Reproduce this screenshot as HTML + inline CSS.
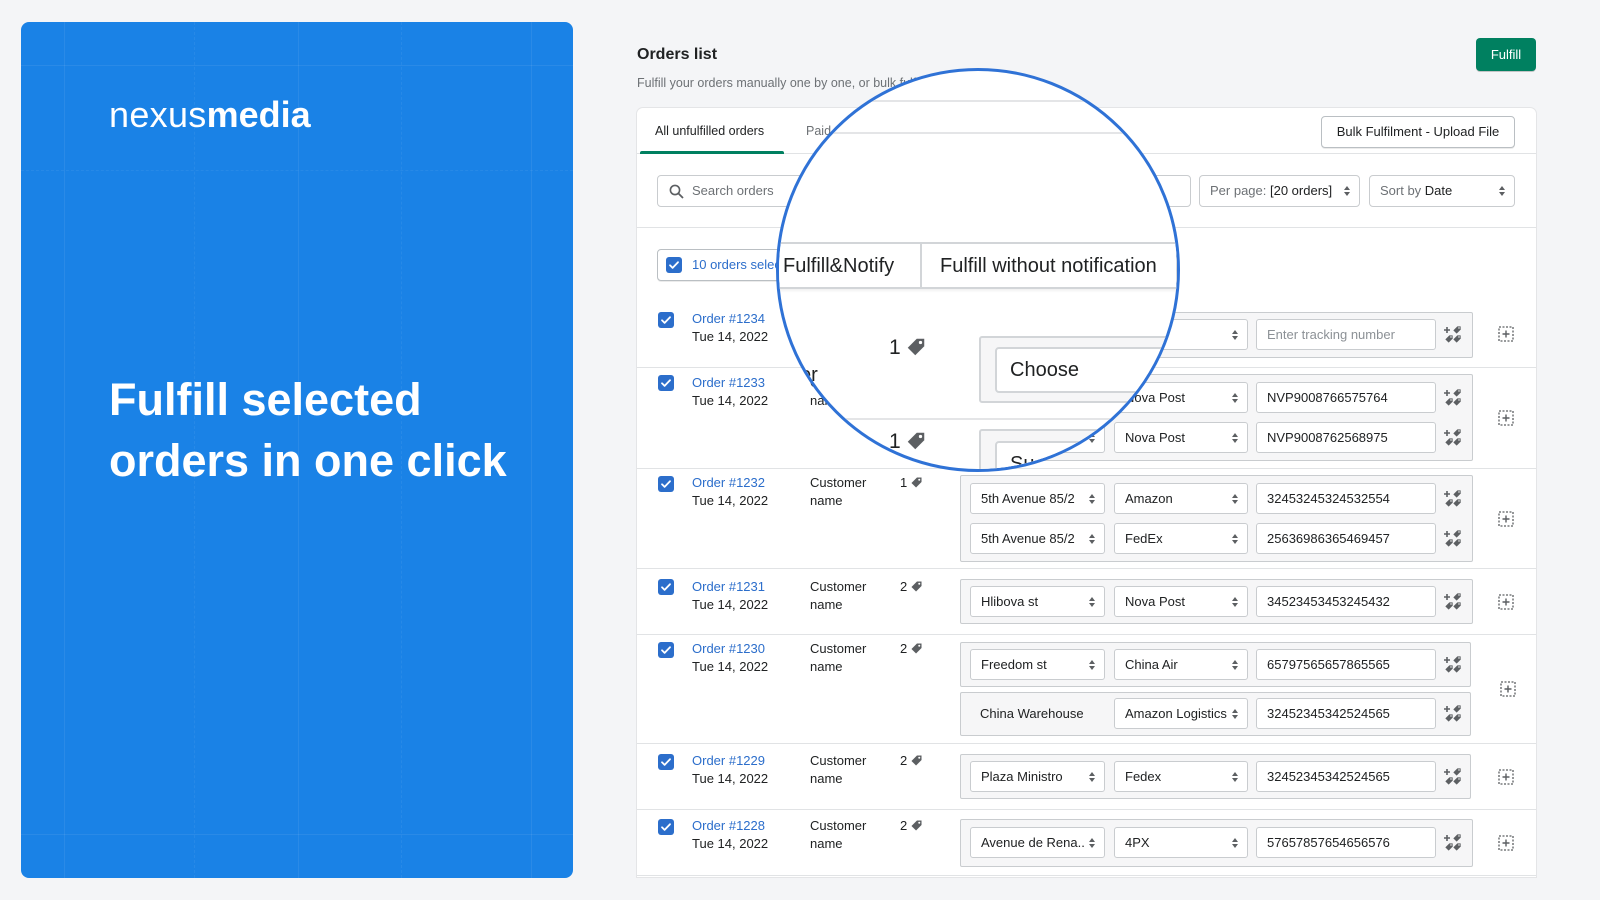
<!DOCTYPE html>
<html><head><meta charset="utf-8">
<style>
*{margin:0;padding:0;box-sizing:border-box}
body{width:1600px;height:900px;background:#f4f5f7;position:relative;overflow:hidden;font-family:"Liberation Sans",sans-serif;color:#202223;font-size:13px}
.a{position:absolute}
.panel{left:21px;top:22px;width:552px;height:856px;background:#1a82e6;border-radius:8px;overflow:hidden}
.vl{position:absolute;top:0;bottom:0;width:1px;background:rgba(255,255,255,0.07)}
.hl{position:absolute;left:0;right:0;height:1px;background:rgba(255,255,255,0.07)}
.card{left:637px;top:108px;width:899px;height:769px;background:#fff;border-radius:6px 6px 0 0;box-shadow:0 0 0 1px #e4e5e7}
.btn{position:absolute;background:#fff;border:1px solid #babfc3;border-radius:4px;box-shadow:0 1px 0 rgba(0,0,0,.08);font-size:13px;text-align:center}
.inp{position:absolute;background:#fff;border:1px solid #c9cccf;border-radius:4px;height:32px;line-height:30px;font-size:13px;color:#6d7175;padding-left:10px}
.sep{position:absolute;left:637px;width:899px;height:1px;background:#e1e3e5}
.g{position:absolute;left:960px;width:513px;background:#f6f6f7;border:1px solid #c9cccf;border-radius:2px}
.f{position:absolute;height:31px;background:#fff;border:1px solid #c9cccf;border-radius:3px;line-height:29px;padding-left:10px;font-size:13px;color:#202223;white-space:nowrap;overflow:hidden}
.s1{left:970px;width:135px}.s2{left:1114px;width:134px}.tk{left:1256px;width:180px}
.ar{position:absolute;right:9px;top:10px}
.cb{position:absolute;left:658px;width:16px;height:16px;background:#2c6ecb;border-radius:3px}
.ord{position:absolute;left:692px;line-height:18px;font-size:13px}
.ord b{font-weight:normal;color:#2c6ecb;display:block}
.cn{position:absolute;left:810px;line-height:18px}
.q{position:absolute;left:900px;line-height:18px}
.ti{position:absolute;left:1444px}
.ad{position:absolute;left:1498px}
</style></head><body>
<svg width="0" height="0" style="position:absolute">
<defs>
<symbol id="arr" viewBox="0 0 6 10"><path d="M3 0L6 4H0z M3 10L0 6H6z" fill="#5c5f62"/></symbol>
<symbol id="chk" viewBox="0 0 16 16"><path d="M4 8.3l2.6 2.6L12 5.2" stroke="#fff" stroke-width="1.8" fill="none" stroke-linecap="round" stroke-linejoin="round"/></symbol>
<symbol id="tag" viewBox="0 0 12 12"><path d="M6.5 0.5H11.5V5.5L5.5 11.5L0.5 6.5Z" fill="#5c5f62"/><circle cx="9" cy="3" r="1.1" fill="#fff"/></symbol>
<symbol id="tk" viewBox="0 0 18 18"><path d="M3 1v6M0 4h6" stroke="#5c5f62" stroke-width="1.6"/><use href="#tag" x="9" y="0" width="8" height="8"/><use href="#tag" x="1" y="9" width="8" height="8"/><use href="#tag" x="9" y="9" width="8" height="8"/></symbol>
<symbol id="add" viewBox="0 0 16 16"><rect x="1" y="1" width="14" height="14" fill="none" stroke="#5c5f62" stroke-width="1.3" stroke-dasharray="2 1.5"/><path d="M8 4.5v7M4.5 8h7" stroke="#5c5f62" stroke-width="1.4"/></symbol>
</defs></svg>

<div class="a panel">
 <div class="vl" style="left:43px"></div><div class="vl" style="left:173px;border-left:1px dashed rgba(255,255,255,.06);background:none"></div><div class="vl" style="left:277px"></div><div class="vl" style="left:380px;border-left:1px dashed rgba(255,255,255,.06);background:none"></div><div class="vl" style="left:510px"></div>
 <div class="hl" style="top:43px"></div><div class="hl" style="top:148px;border-top:1px dashed rgba(255,255,255,.06);background:none"></div><div class="hl" style="top:812px"></div>
 <div class="a" style="left:88px;top:72px;font-size:36px;color:#fff;line-height:42px;white-space:nowrap"><span style="font-weight:300;letter-spacing:.3px">nexus</span><b>media</b></div>
 <div class="a" style="left:88px;top:347px;font-size:45px;font-weight:bold;color:#fff;line-height:61px;white-space:nowrap">Fulfill selected<br>orders in one click</div>
</div>

<div class="a" style="left:637px;top:46px;font-size:16px;font-weight:bold;color:#202223">Orders list</div>
<div class="a" style="left:637px;top:76px;font-size:12.5px;color:#6d7175">Fulfill your orders manually one by one, or bulk fulfill</div>
<div class="a" style="left:1476px;top:38px;width:60px;height:33px;background:#008060;border-radius:4px;color:#fff;font-size:13px;line-height:33px;text-align:center;box-shadow:0 1px 0 rgba(0,0,0,.2)">Fulfill</div>

<div class="a card"></div>
<div class="a" style="left:655px;top:124px;font-size:12.5px">All unfulfilled orders</div>
<div class="a" style="left:806px;top:124px;font-size:12.5px;color:#6d7175">Paid</div>
<div class="a" style="left:637px;top:153px;width:899px;height:1px;background:#e1e3e5"></div>
<div class="a" style="left:640px;top:151px;width:144px;height:3px;background:#008060;border-radius:2px 2px 0 0"></div>
<div class="btn" style="left:1321px;top:116px;width:194px;height:32px;line-height:30px">Bulk Fulfilment - Upload File</div>

<div class="inp" style="left:657px;top:175px;width:534px;padding-left:34px">Search orders
 <svg class="a" style="left:11px;top:8px" width="15" height="15" viewBox="0 0 15 15"><circle cx="6" cy="6" r="4.6" fill="none" stroke="#5c5f62" stroke-width="1.6"/><path d="M9.5 9.5L14 14" stroke="#5c5f62" stroke-width="1.8"/></svg></div>
<div class="inp" style="left:1199px;top:175px;width:161px">Per page: <span style="color:#202223">[20 orders]</span><svg class="ar" width="6" height="10"><use href="#arr"/></svg></div>
<div class="inp" style="left:1369px;top:175px;width:146px">Sort by <span style="color:#202223">Date</span><svg class="ar" width="6" height="10"><use href="#arr"/></svg></div>
<div class="a" style="left:637px;top:227px;width:899px;height:1px;background:#e1e3e5"></div>

<div class="btn" style="left:657px;top:249px;width:140px;height:32px;text-align:left;padding-left:34px;line-height:30px;color:#2c6ecb;white-space:nowrap;overflow:hidden">10 orders selected</div>
<div class="cb" style="left:666px;top:257px"><svg width="16" height="16"><use href="#chk"/></svg></div>

<div class="sep" style="top:367px"></div><div class="sep" style="top:468px"></div><div class="sep" style="top:568px"></div><div class="sep" style="top:634px"></div><div class="sep" style="top:743px"></div><div class="sep" style="top:809px"></div><div class="sep" style="top:875px"></div>

<div class="cb" style="top:312px"><svg width="16" height="16"><use href="#chk"/></svg></div>
<div class="ord" style="top:310px"><b>Order #1234</b>Tue 14, 2022</div>
<div class="g" style="top:312px;height:46px"></div>
<div class="f s1" style="top:319px"><svg class="ar" width="6" height="10"><use href="#arr"/></svg></div>
<div class="f s2" style="top:319px"><svg class="ar" width="6" height="10"><use href="#arr"/></svg></div>
<div class="f tk" style="top:319px;color:#8c9196">Enter tracking number</div>
<svg class="ti" style="top:326px" width="18" height="18"><use href="#tk"/></svg>
<svg class="ad" style="top:326px" width="16" height="16"><use href="#add"/></svg>

<div class="cb" style="top:375px"><svg width="16" height="16"><use href="#chk"/></svg></div>
<div class="ord" style="top:374px"><b>Order #1233</b>Tue 14, 2022</div>
<div class="cn" style="top:374px">Customer<br>name</div>
<div class="g" style="top:374px;height:87px"></div>
<div class="f s1" style="top:382px"><svg class="ar" width="6" height="10"><use href="#arr"/></svg></div>
<div class="f s2" style="top:382px">Nova Post<svg class="ar" width="6" height="10"><use href="#arr"/></svg></div>
<div class="f tk" style="top:382px">NVP9008766575764</div>
<svg class="ti" style="top:389px" width="18" height="18"><use href="#tk"/></svg>
<div class="f s1" style="top:422px"><svg class="ar" width="6" height="10"><use href="#arr"/></svg></div>
<div class="f s2" style="top:422px">Nova Post<svg class="ar" width="6" height="10"><use href="#arr"/></svg></div>
<div class="f tk" style="top:422px">NVP9008762568975</div>
<svg class="ti" style="top:429px" width="18" height="18"><use href="#tk"/></svg>
<svg class="ad" style="top:410px" width="16" height="16"><use href="#add"/></svg>

<div class="cb" style="top:476px"><svg width="16" height="16"><use href="#chk"/></svg></div>
<div class="ord" style="top:474px"><b>Order #1232</b>Tue 14, 2022</div>
<div class="cn" style="top:474px">Customer<br>name</div>
<div class="q" style="top:474px">1 <svg width="11" height="11" style="vertical-align:-1px"><use href="#tag"/></svg></div>
<div class="g" style="top:475px;height:87px"></div>
<div class="f s1" style="top:483px">5th Avenue 85/2<svg class="ar" width="6" height="10"><use href="#arr"/></svg></div>
<div class="f s2" style="top:483px">Amazon<svg class="ar" width="6" height="10"><use href="#arr"/></svg></div>
<div class="f tk" style="top:483px">32453245324532554</div>
<svg class="ti" style="top:490px" width="18" height="18"><use href="#tk"/></svg>
<div class="f s1" style="top:523px">5th Avenue 85/2<svg class="ar" width="6" height="10"><use href="#arr"/></svg></div>
<div class="f s2" style="top:523px">FedEx<svg class="ar" width="6" height="10"><use href="#arr"/></svg></div>
<div class="f tk" style="top:523px">25636986365469457</div>
<svg class="ti" style="top:530px" width="18" height="18"><use href="#tk"/></svg>
<svg class="ad" style="top:511px" width="16" height="16"><use href="#add"/></svg>

<div class="cb" style="top:579px"><svg width="16" height="16"><use href="#chk"/></svg></div>
<div class="ord" style="top:578px"><b>Order #1231</b>Tue 14, 2022</div>
<div class="cn" style="top:578px">Customer<br>name</div>
<div class="q" style="top:578px">2 <svg width="11" height="11" style="vertical-align:-1px"><use href="#tag"/></svg></div>
<div class="g" style="top:579px;height:45px"></div>
<div class="f s1" style="top:586px">Hlibova st<svg class="ar" width="6" height="10"><use href="#arr"/></svg></div>
<div class="f s2" style="top:586px">Nova Post<svg class="ar" width="6" height="10"><use href="#arr"/></svg></div>
<div class="f tk" style="top:586px">34523453453245432</div>
<svg class="ti" style="top:593px" width="18" height="18"><use href="#tk"/></svg>
<svg class="ad" style="top:594px" width="16" height="16"><use href="#add"/></svg>

<div class="cb" style="top:642px"><svg width="16" height="16"><use href="#chk"/></svg></div>
<div class="ord" style="top:640px"><b>Order #1230</b>Tue 14, 2022</div>
<div class="cn" style="top:640px">Customer<br>name</div>
<div class="q" style="top:640px">2 <svg width="11" height="11" style="vertical-align:-1px"><use href="#tag"/></svg></div>
<div class="g" style="top:642px;height:45px;width:511px"></div>
<div class="f s1" style="top:649px">Freedom st<svg class="ar" width="6" height="10"><use href="#arr"/></svg></div>
<div class="f s2" style="top:649px">China Air<svg class="ar" width="6" height="10"><use href="#arr"/></svg></div>
<div class="f tk" style="top:649px">65797565657865565</div>
<svg class="ti" style="top:656px" width="18" height="18"><use href="#tk"/></svg>
<div class="g" style="top:692px;height:44px;width:511px"></div>
<div class="a" style="left:980px;top:706px">China Warehouse</div>
<div class="f s2" style="top:698px">Amazon Logistics<svg class="ar" width="6" height="10"><use href="#arr"/></svg></div>
<div class="f tk" style="top:698px">32452345342524565</div>
<svg class="ti" style="top:705px" width="18" height="18"><use href="#tk"/></svg>
<svg class="ad" style="top:681px;left:1500px" width="16" height="16"><use href="#add"/></svg>

<div class="cb" style="top:754px"><svg width="16" height="16"><use href="#chk"/></svg></div>
<div class="ord" style="top:752px"><b>Order #1229</b>Tue 14, 2022</div>
<div class="cn" style="top:752px">Customer<br>name</div>
<div class="q" style="top:752px">2 <svg width="11" height="11" style="vertical-align:-1px"><use href="#tag"/></svg></div>
<div class="g" style="top:754px;height:45px;width:511px"></div>
<div class="f s1" style="top:761px">Plaza Ministro<svg class="ar" width="6" height="10"><use href="#arr"/></svg></div>
<div class="f s2" style="top:761px">Fedex<svg class="ar" width="6" height="10"><use href="#arr"/></svg></div>
<div class="f tk" style="top:761px">32452345342524565</div>
<svg class="ti" style="top:768px" width="18" height="18"><use href="#tk"/></svg>
<svg class="ad" style="top:769px" width="16" height="16"><use href="#add"/></svg>

<div class="cb" style="top:819px"><svg width="16" height="16"><use href="#chk"/></svg></div>
<div class="ord" style="top:817px"><b>Order #1228</b>Tue 14, 2022</div>
<div class="cn" style="top:817px">Customer<br>name</div>
<div class="q" style="top:817px">2 <svg width="11" height="11" style="vertical-align:-1px"><use href="#tag"/></svg></div>
<div class="g" style="top:819px;height:48px"></div>
<div class="f s1" style="top:827px">Avenue de Rena..<svg class="ar" width="6" height="10"><use href="#arr"/></svg></div>
<div class="f s2" style="top:827px">4PX<svg class="ar" width="6" height="10"><use href="#arr"/></svg></div>
<div class="f tk" style="top:827px">57657857654656576</div>
<svg class="ti" style="top:834px" width="18" height="18"><use href="#tk"/></svg>
<svg class="ad" style="top:835px" width="16" height="16"><use href="#add"/></svg>

<div class="a" style="left:776px;top:68px;width:404px;height:404px;border-radius:50%;overflow:hidden;background:#fff;border:3px solid #2f72d6">
 <div style="position:absolute;left:-779px;top:-71px;width:1600px;height:900px">
  <div class="a" style="left:760px;top:100px;width:440px;height:2px;background:#e4e5e7"></div>
  <div class="a" style="left:760px;top:132px;width:440px;height:2px;background:#e4e5e7"></div>
  <div class="a" style="left:760px;top:242px;width:418px;height:47px;border:2px solid #d2d5d8;border-left:none;background:#fff;box-shadow:0 2px 2px rgba(0,0,0,.06)"></div>
  <div class="a" style="left:920px;top:242px;width:2px;height:47px;background:#d2d5d8"></div>
  <div class="a" style="left:783px;top:253px;font-size:20px;line-height:26px">Fulfill&amp;Notify</div>
  <div class="a" style="left:940px;top:253px;font-size:20px;line-height:26px;white-space:nowrap">Fulfill without notification</div>
  <div class="a" style="left:889px;top:335px;font-size:21px;line-height:26px">1 <svg width="18" height="18" style="vertical-align:-2px"><use href="#tag"/></svg></div>
  <div class="a" style="left:979px;top:336px;width:260px;height:67px;background:#f6f6f7;border:2px solid #d2d5d8;border-radius:3px"></div>
  <div class="a" style="left:995px;top:347px;width:240px;height:46px;background:#fff;border:2px solid #d2d5d8;border-radius:4px;font-size:20px;line-height:42px;padding-left:13px">Choose</div>
  <div class="a" style="left:800px;top:362px;font-size:20px;line-height:26px">er</div>
  <div class="a" style="left:760px;top:418px;width:440px;height:2px;background:#e4e5e7"></div>
  <div class="a" style="left:889px;top:429px;font-size:21px;line-height:26px">1 <svg width="18" height="18" style="vertical-align:-2px"><use href="#tag"/></svg></div>
  <div class="a" style="left:979px;top:429px;width:260px;height:67px;background:#f6f6f7;border:2px solid #d2d5d8;border-radius:3px"></div>
  <div class="a" style="left:995px;top:441px;width:240px;height:46px;background:#fff;border:2px solid #d2d5d8;border-radius:4px;font-size:20px;line-height:42px;padding-left:13px">Su</div>
 </div>
</div>
</body></html>
